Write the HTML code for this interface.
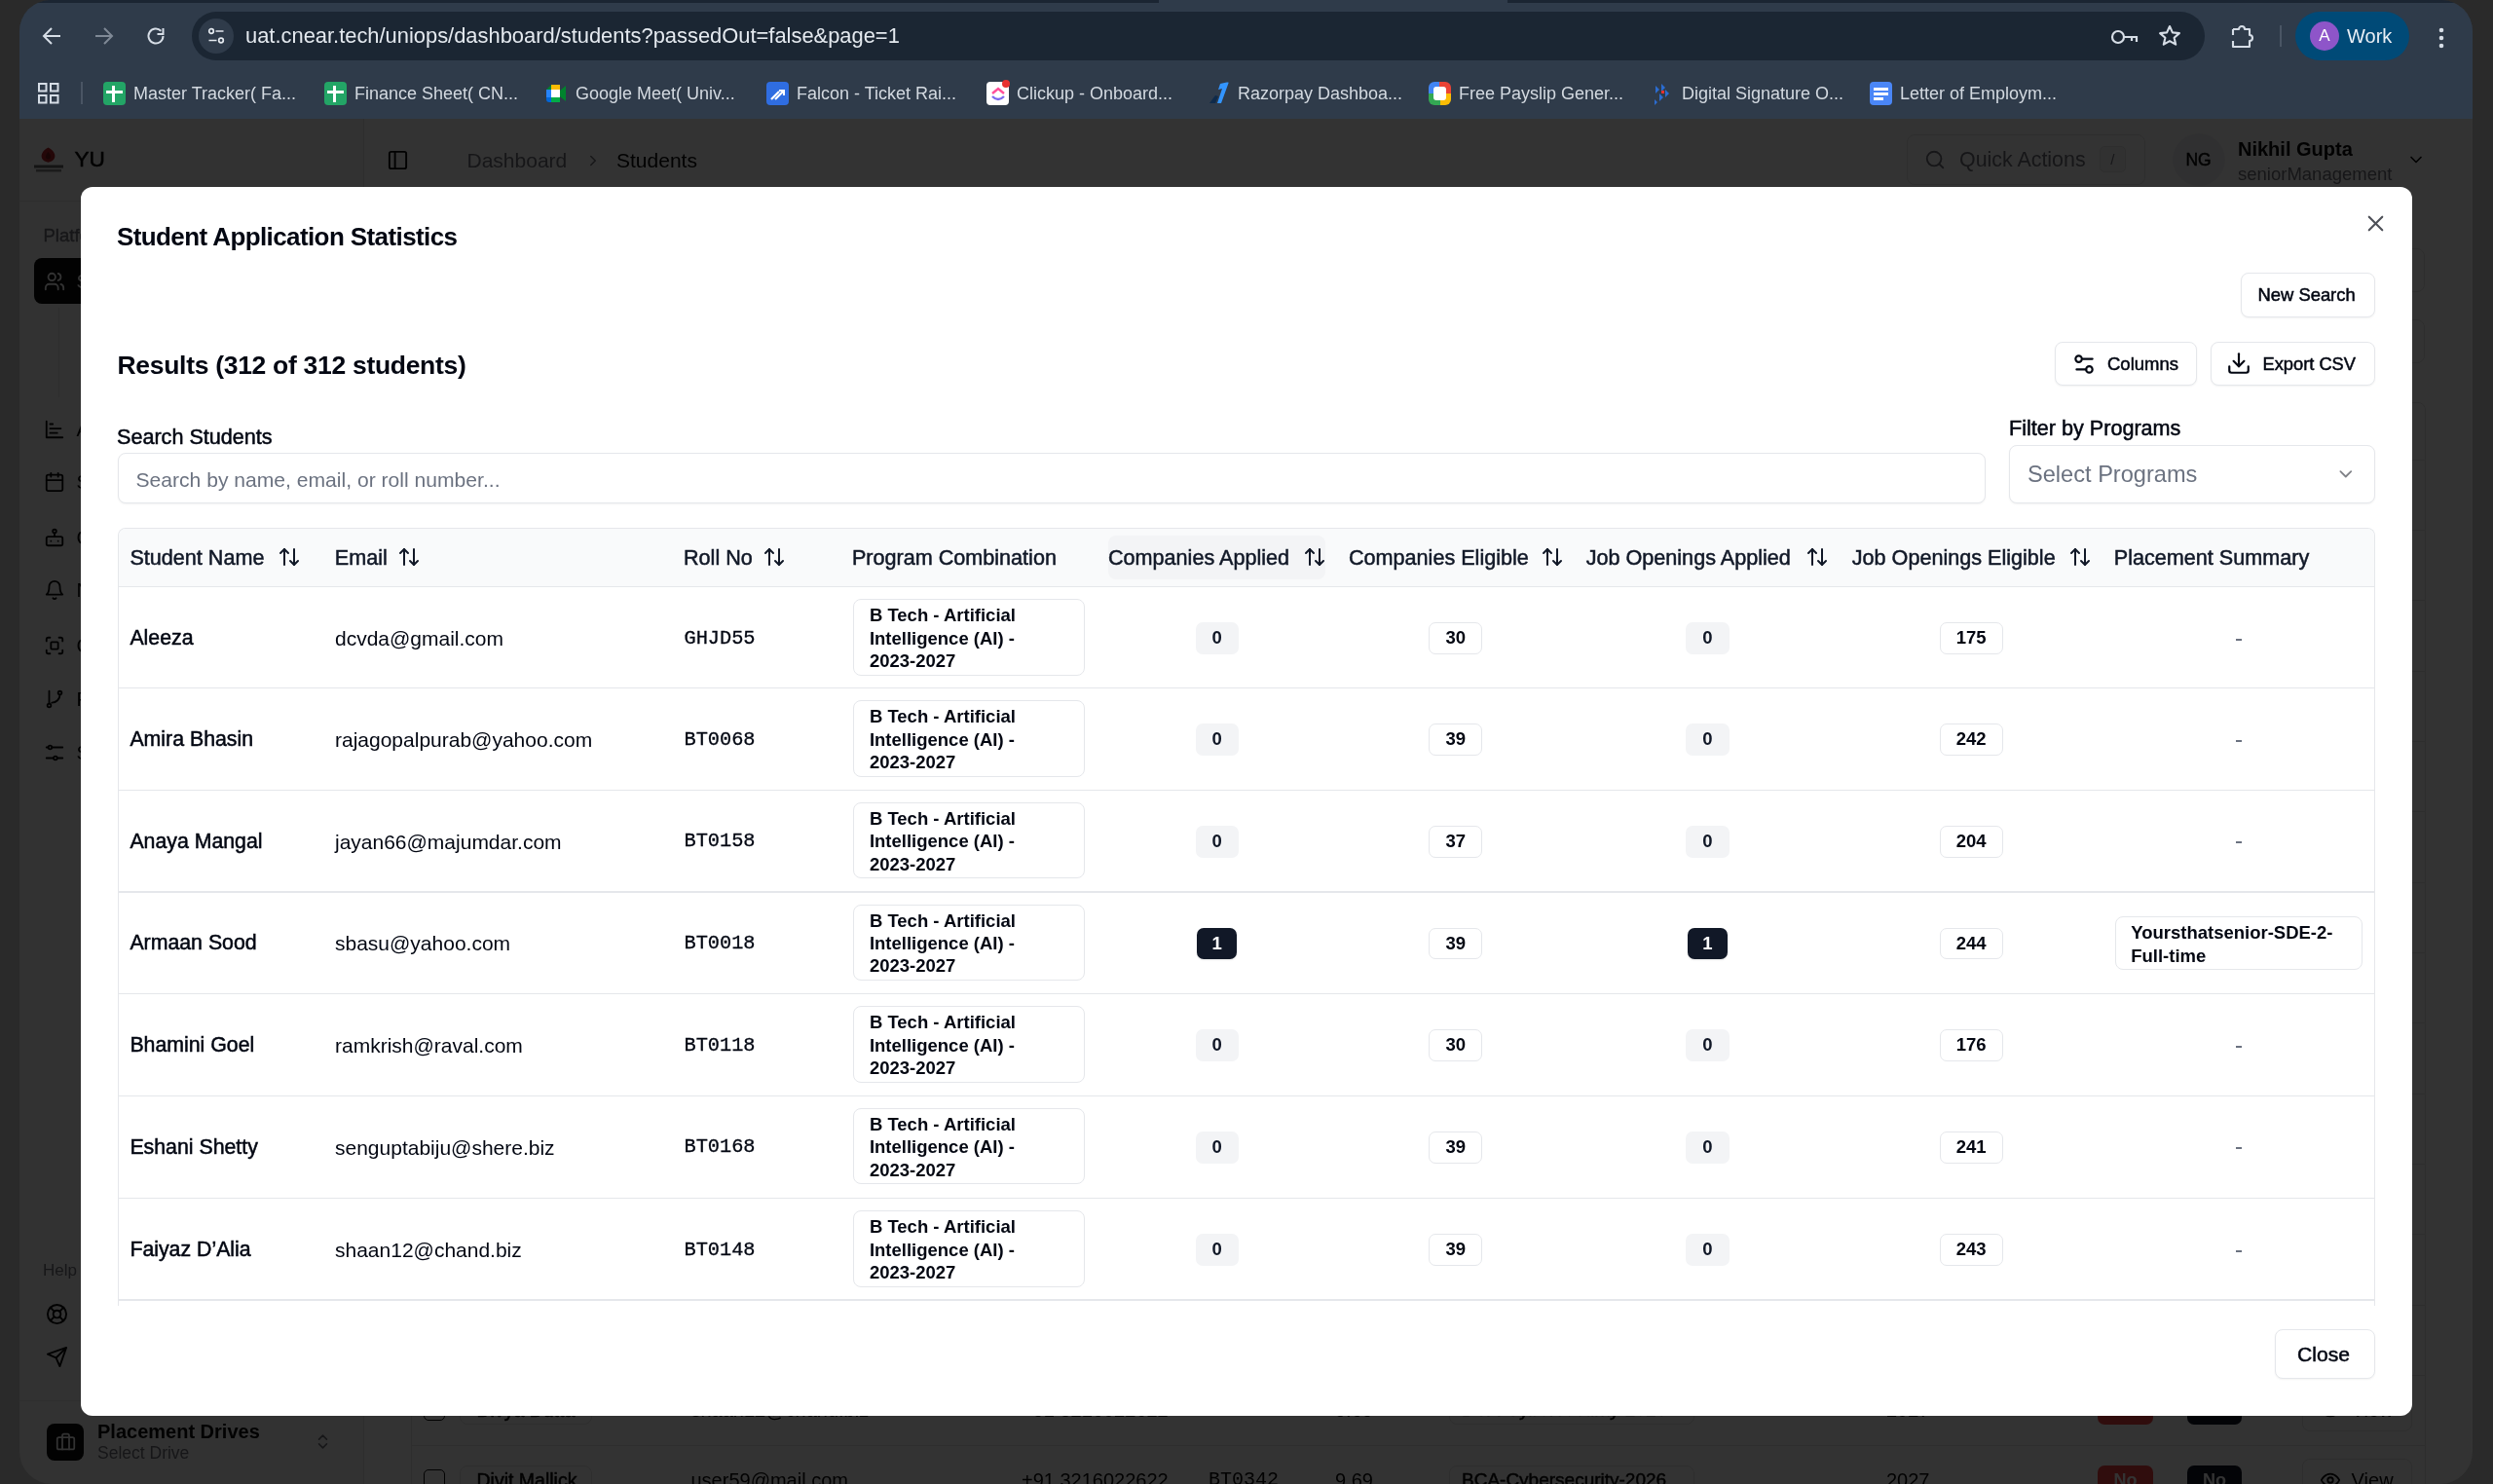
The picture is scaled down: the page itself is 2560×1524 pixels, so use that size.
<!DOCTYPE html>
<html>
<head>
<meta charset="utf-8">
<style>
*{box-sizing:border-box;margin:0;padding:0}
html,body{width:2560px;height:1524px;overflow:hidden;background:#2a2a2a;font-family:"Liberation Sans",sans-serif}
.abs{position:absolute}
#win{position:absolute;left:20px;top:0;width:2519px;height:1524px;border-radius:32px 32px 0 0;overflow:hidden;background:#333;will-change:transform}
#tabstrip{position:absolute;left:0;top:0;width:2520px;height:3px;background:#1b2532}
#acttab{position:absolute;left:1170px;top:0;width:358px;height:3px;background:#2f3b4a}
#toolbar{position:absolute;left:0;top:3px;width:2520px;height:118.5px;background:#2f3b4a}
#addr{position:absolute;left:177px;top:9px;width:2067px;height:50px;border-radius:25px;background:#1b2633}
#siteic{position:absolute;left:7px;top:7px;width:36px;height:36px;border-radius:18px;background:#2f3b4a}
#url{position:absolute;left:55px;top:0;height:50px;line-height:50px;color:#e4e9ef;font-size:21.9px;white-space:nowrap}
.bm{position:absolute;top:81px;height:24px;color:#d3d9e0;font-size:18px;line-height:24px;white-space:nowrap}
.bm .ic{position:absolute;left:0;top:0;width:23px;height:24px;border-radius:4px}
.bm span{position:absolute;left:31px;top:0}
#page{position:absolute;left:0;top:121.5px;width:2520px;height:1403px;background:#fff}
#overlay{position:absolute;left:0;top:121.5px;width:2520px;height:1403px;background:rgba(0,0,0,.8)}
#modal{position:absolute;left:83px;top:192px;width:2394px;height:1262px;background:#fff;border-radius:12px;overflow:hidden;will-change:transform}
.t{position:absolute;line-height:1;white-space:nowrap}
.badge{height:32.6px;border-radius:7px;font-size:18.5px;font-weight:700;line-height:30.6px;text-align:center}
</style>
</head>
<body>
<div id="win">
  <div id="tabstrip"></div><div id="acttab"></div>
  <div id="toolbar">
    <!-- nav icons -->
    <svg class="abs" style="left:22px;top:23px" width="22" height="22" viewBox="0 0 22 22"><path d="M20 11H3M11 3L3 11l8 8" fill="none" stroke="#d6dde6" stroke-width="2"/></svg>
    <svg class="abs" style="left:76px;top:23px" width="22" height="22" viewBox="0 0 22 22"><path d="M2 11h17M11 3l8 8-8 8" fill="none" stroke="#7f8996" stroke-width="2"/></svg>
    <svg class="abs" style="left:129px;top:23px" width="22" height="22" viewBox="0 0 22 22"><path d="M18.5 11a7.5 7.5 0 1 1-2.2-5.3" fill="none" stroke="#d6dde6" stroke-width="2"/><path d="M18.5 3v6h-6" fill="none" stroke="#d6dde6" stroke-width="2"/></svg>
    <div id="addr">
      <div id="siteic"><svg class="abs" style="left:8px;top:8px" width="20" height="20" viewBox="0 0 20 20"><circle cx="5" cy="5" r="2.3" fill="none" stroke="#e4e9ef" stroke-width="1.7"/><path d="M9.5 5h8" stroke="#e4e9ef" stroke-width="1.7"/><circle cx="15" cy="14.5" r="2.3" fill="none" stroke="#e4e9ef" stroke-width="1.7"/><path d="M2.5 14.5h8" stroke="#e4e9ef" stroke-width="1.7"/></svg></div>
      <div id="url">uat.cnear.tech/uniops/dashboard/students?passedOut=false&amp;page=1</div>
    </div>

    <!-- right toolbar icons -->
    <svg class="abs" style="left:2147px;top:26px" width="29" height="18" viewBox="0 0 29 18" fill="none" stroke="#d6dde6" stroke-width="2.2"><circle cx="8" cy="9" r="6"/><path d="M14 9h13v5M22 9v4"/></svg>
    <svg class="abs" style="left:2196px;top:22px" width="24" height="24" viewBox="0 0 24 24" fill="none" stroke="#d6dde6" stroke-width="2.1" stroke-linejoin="round"><path d="M12 2l2.9 6.4 7 .7-5.3 4.7 1.6 6.9L12 17.1 5.8 20.7l1.6-6.9L2.1 9.1l7-.7z"/></svg>
    <svg class="abs" style="left:2270px;top:21px" width="26" height="26" viewBox="0 0 26 26" fill="none" stroke="#d6dde6" stroke-width="2.1" stroke-linejoin="round"><path d="M3 6h6a3 3 0 0 1 6 0h5v6a3 3 0 0 1 0 6v6H3v-6M3 6v6"/></svg>
    <div class="abs" style="left:2321px;top:23px;width:2px;height:22px;background:#4a5564"></div>
    <div class="abs" style="left:2337px;top:8.5px;width:117px;height:50px;border-radius:25px;background:#004a77">
      <div class="abs" style="left:15px;top:10px;width:30px;height:30px;border-radius:15px;background:#8e55c9;color:#fff;font-size:17px;line-height:30px;text-align:center">A</div>
      <div class="abs" style="left:53px;top:0;height:50px;line-height:50px;color:#e8eef5;font-size:20px">Work</div>
    </div>
    <svg class="abs" style="left:2483px;top:24px" width="8" height="24" viewBox="0 0 8 24" fill="#d6dde6"><circle cx="4" cy="4" r="2.3"/><circle cx="4" cy="12" r="2.3"/><circle cx="4" cy="20" r="2.3"/></svg>

    <!-- apps grid -->
    <svg class="abs" style="left:19px;top:82px" width="22" height="22" viewBox="0 0 22 22" fill="none" stroke="#d6dde6" stroke-width="2"><rect x="1" y="1" width="7.5" height="7.5"/><rect x="13" y="1" width="7.5" height="7.5"/><rect x="1" y="13" width="7.5" height="7.5"/><rect x="13" y="13" width="7.5" height="7.5"/></svg>
    <div class="abs" style="left:62.5px;top:81px;width:2px;height:23px;background:#4a5564"></div>
    <div class="bm" style="left:86px"><div class="ic" style="background:#23a566"><div class="abs" style="left:3px;top:9px;width:17px;height:3px;background:#fff"></div><div class="abs" style="left:9px;top:4px;width:3px;height:17px;background:#fff"></div></div><span>Master Tracker( Fa...</span></div>
    <div class="bm" style="left:313px"><div class="ic" style="background:#23a566"><div class="abs" style="left:3px;top:9px;width:17px;height:3px;background:#fff"></div><div class="abs" style="left:9px;top:4px;width:3px;height:17px;background:#fff"></div></div><span>Finance Sheet( CN...</span></div>
    <div class="bm" style="left:540px"><svg class="ic" width="23" height="24" viewBox="0 0 23 24"><path d="M1 8l5-5h9v6l6-5v16l-6-5v6H6" fill="#00832d"/><path d="M1 8h5v8H1z" fill="#2684fc"/><path d="M6 3h9v5H6z" fill="#fbbc04"/><path d="M1 16h5v5H4a3 3 0 0 1-3-3z" fill="#0066da"/><path d="M6 16h9v5H6z" fill="#00ac47"/><path d="M6 8h9v8H6z" fill="#fff"/></svg><span>Google Meet( Univ...</span></div>
    <div class="bm" style="left:767px"><div class="ic" style="background:#2f6de1"><svg class="abs" style="left:4px;top:5px" width="15" height="14" viewBox="0 0 15 14"><path d="M1 13l8-8M5 13l8-8M9 4h5v5" stroke="#fff" stroke-width="2.2" fill="none"/></svg></div><span>Falcon - Ticket Rai...</span></div>
    <div class="bm" style="left:993px"><div class="ic" style="background:#fff"><svg class="abs" style="left:4px;top:5px" width="16" height="15" viewBox="0 0 16 15"><path d="M2 7l6-5 6 5" stroke="#ff4f9a" stroke-width="2.4" fill="none"/><path d="M2 10c4 4 8 4 12 0" stroke="#7b68ee" stroke-width="2.4" fill="none"/></svg><div class="abs" style="left:16px;top:-2px;width:8px;height:8px;border-radius:4px;background:#e8312f"></div></div><span>Clickup - Onboard...</span></div>
    <div class="bm" style="left:1220px"><svg class="ic" width="23" height="24" viewBox="0 0 23 24"><path d="M2 22l6-8 3 1-3 7z" fill="#0f2a4a"/><path d="M10 22l5-15-4 1 2-6 9-2-8 22z" fill="#3395ff"/></svg><span>Razorpay Dashboa...</span></div>
    <div class="bm" style="left:1447px"><div class="ic" style="background:conic-gradient(#ea4335 0 25%,#fbbc04 0 50%,#34a853 0 75%,#4285f4 0);border-radius:6px"><div class="abs" style="left:5px;top:5px;width:13px;height:14px;background:#fff;border-radius:3px"></div></div><span>Free Payslip Gener...</span></div>
    <div class="bm" style="left:1676px"><svg class="ic" width="23" height="24" viewBox="0 0 23 24"><path d="M4 4l4 4-4 4zM10 2l4 4-4 4zM8 12l4 4-4 4zM14 8l4 4-4 4zM3 18l3 3-3 3z" fill="#2b6cd1"/><rect x="10" y="9" width="3" height="3" fill="#e8312f"/></svg><span>Digital Signature O...</span></div>
    <div class="bm" style="left:1900px"><div class="ic" style="background:#4a86f7"><div class="abs" style="left:4px;top:6px;width:15px;height:2.5px;background:#fff"></div><div class="abs" style="left:4px;top:11px;width:15px;height:2.5px;background:#fff"></div><div class="abs" style="left:4px;top:16px;width:10px;height:2.5px;background:#fff"></div></div><span>Letter of Employm...</span></div>
  </div>
  <div id="page">
<div class="abs" style="left:0;top:0;width:353.5px;height:1403px;background:#fafafa;border-right:1px solid #e5e5e5"></div>
<svg class="abs" style="left:14px;top:28px" width="32" height="28" viewBox="0 0 32 28"><path d="M15.5 1.5c-3 1.5-5.5 3.5-6.5 6.5-1.2 3.4.6 6.6 3.5 7.8l3 .9 3-.9c2.9-1.2 4.7-4.4 3.5-7.8-1-3-3.5-5-6.5-6.5z" fill="#b3262b"/><path d="M15.5 6c-1.5 1.5-2.6 3.2-2.6 5 0 1.6 1.2 2.6 2.6 2.6s2.6-1 2.6-2.6c0-1.8-1.1-3.5-2.6-5z" fill="#7a1a1d"/><rect x="1" y="19.5" width="30" height="3" fill="#666"/><rect x="3" y="24" width="26" height="2.5" fill="#888"/></svg>
<div class="abs" style="left:56.5px;top:30.5px;font-size:22.6px;-webkit-text-stroke:0.5px currentColor;color:#0a0a0a;line-height:24px">YU</div>
<div class="abs" style="left:24.5px;top:109.6px;font-size:18.5px;-webkit-text-stroke:0.4px currentColor;color:#71717a;line-height:22px">Platform</div>
<div class="abs" style="left:0;top:84.4px;width:353.5px;height:1px;background:#e5e5e5"></div>
<div class="abs" style="left:15px;top:143.5px;width:323px;height:47px;border-radius:8px;background:#0a0a0a"></div>
<svg class="abs" style="left:25px;top:156px" width="22" height="22" viewBox="0 0 24 24" fill="none" stroke="#fafafa" stroke-width="2" stroke-linecap="round" stroke-linejoin="round"><path d="M16 21v-2a4 4 0 0 0-4-4H6a4 4 0 0 0-4 4v2"/><circle cx="9" cy="7" r="4"/><path d="M22 21v-2a4 4 0 0 0-3-3.87M16 3.13a4 4 0 0 1 0 7.75"/></svg><div class="abs" style="left:40px;top:194.5px;width:1px;height:92px;background:#e5e5e5"></div>
<div class="abs" style="left:58.5px;top:156.0px;font-size:20px;color:#fafafa;line-height:22px;white-space:nowrap">Students</div>
<div class="abs" style="left:58.5px;top:308.5px;font-size:20px;color:#0a0a0a;line-height:22px;white-space:nowrap">Analytics</div>
<div class="abs" style="left:58.5px;top:362.5px;font-size:20px;color:#0a0a0a;line-height:22px;white-space:nowrap">Schedule</div>
<div class="abs" style="left:58.5px;top:419.0px;font-size:20px;color:#0a0a0a;line-height:22px;white-space:nowrap">Companies</div>
<div class="abs" style="left:58.5px;top:473.5px;font-size:20px;color:#0a0a0a;line-height:22px;white-space:nowrap">Notifications</div>
<div class="abs" style="left:58.5px;top:530.0px;font-size:20px;color:#0a0a0a;line-height:22px;white-space:nowrap">Campus</div>
<div class="abs" style="left:58.5px;top:585.5px;font-size:20px;color:#0a0a0a;line-height:22px;white-space:nowrap">Pipelines</div>
<div class="abs" style="left:58.5px;top:640.5px;font-size:20px;color:#0a0a0a;line-height:22px;white-space:nowrap">Settings</div>
<svg class="abs" style="left:25px;top:308.5px" width="22" height="22" viewBox="0 0 24 24" fill="none" stroke="#0a0a0a" stroke-width="2" stroke-linecap="round" stroke-linejoin="round"><path d="M3 3v18h18"/><path d="M7 16h8M7 11h12M7 6h3"/></svg>
<svg class="abs" style="left:25px;top:362.5px" width="22" height="22" viewBox="0 0 24 24" fill="none" stroke="#0a0a0a" stroke-width="2" stroke-linecap="round" stroke-linejoin="round"><rect x="3" y="4" width="18" height="18" rx="2"/><path d="M16 2v4M8 2v4M3 10h18"/></svg>
<svg class="abs" style="left:25px;top:419px" width="22" height="22" viewBox="0 0 24 24" fill="none" stroke="#0a0a0a" stroke-width="2" stroke-linecap="round" stroke-linejoin="round"><rect x="3" y="11" width="18" height="10" rx="2"/><path d="M12 7v4M8 16h.01M16 16h.01"/><circle cx="12" cy="5" r="2"/></svg>
<svg class="abs" style="left:25px;top:473.5px" width="22" height="22" viewBox="0 0 24 24" fill="none" stroke="#0a0a0a" stroke-width="2" stroke-linecap="round" stroke-linejoin="round"><path d="M6 8a6 6 0 0 1 12 0c0 7 3 9 3 9H3s3-2 3-9"/><path d="M10.3 21a1.94 1.94 0 0 0 3.4 0"/></svg>
<svg class="abs" style="left:25px;top:530px" width="22" height="22" viewBox="0 0 24 24" fill="none" stroke="#0a0a0a" stroke-width="2" stroke-linecap="round" stroke-linejoin="round"><path d="M3 7V5a2 2 0 0 1 2-2h2M17 3h2a2 2 0 0 1 2 2v2M21 17v2a2 2 0 0 1-2 2h-2M7 21H5a2 2 0 0 1-2-2v-2"/><rect x="8" y="8" width="8" height="8" rx="1"/></svg>
<svg class="abs" style="left:25px;top:585.5px" width="22" height="22" viewBox="0 0 24 24" fill="none" stroke="#0a0a0a" stroke-width="2" stroke-linecap="round" stroke-linejoin="round"><circle cx="6" cy="19" r="2"/><circle cx="18" cy="5" r="2"/><path d="M6 3v14M18 7a9 9 0 0 1-9 9"/></svg>
<svg class="abs" style="left:25px;top:640.5px" width="22" height="22" viewBox="0 0 24 24" fill="none" stroke="#0a0a0a" stroke-width="2" stroke-linecap="round" stroke-linejoin="round"><path d="M21 6H9M5 6H3M21 18h-6M11 18H3"/><circle cx="7" cy="6" r="2"/><circle cx="13" cy="18" r="2"/></svg>
<div class="abs" style="left:24px;top:1172.5px;font-size:17px;color:#71717a;line-height:22px">Help</div>
<svg class="abs" style="left:27px;top:1216px" width="23" height="23" viewBox="0 0 24 24" fill="none" stroke="#0a0a0a" stroke-width="2" stroke-linecap="round" stroke-linejoin="round"><circle cx="12" cy="12" r="10"/><circle cx="12" cy="12" r="4"/><path d="M4.9 4.9l4.3 4.3M14.8 14.8l4.3 4.3M14.8 9.2l4.3-4.3M4.9 19.1l4.3-4.3"/></svg><svg class="abs" style="left:27px;top:1260px" width="23" height="23" viewBox="0 0 24 24" fill="none" stroke="#0a0a0a" stroke-width="2" stroke-linecap="round" stroke-linejoin="round"><path d="M22 2L11 13M22 2l-7 20-4-9-9-4z"/></svg><div class="abs" style="left:0;top:1316.5px;width:353.5px;height:1px;background:#e5e5e5"></div>
<div class="abs" style="left:28.4px;top:1340.3px;width:38px;height:38.5px;border-radius:8px;background:#0a0a0a"></div>
<svg class="abs" style="left:37px;top:1348px" width="21" height="21" viewBox="0 0 24 24" fill="none" stroke="#fafafa" stroke-width="2" stroke-linecap="round" stroke-linejoin="round"><rect x="2" y="7" width="20" height="14" rx="2"/><path d="M16 21V5a2 2 0 0 0-2-2h-4a2 2 0 0 0-2 2v16"/></svg><div class="abs" style="left:80px;top:1337px;font-size:20px;font-weight:700;color:#0a0a0a;line-height:22px">Placement Drives</div>
<div class="abs" style="left:80px;top:1360px;font-size:17.5px;color:#71717a;line-height:20px">Select Drive</div>
<svg class="abs" style="left:302px;top:1349px" width="19" height="19" viewBox="0 0 24 24" fill="none" stroke="#71717a" stroke-width="2" stroke-linecap="round" stroke-linejoin="round"><path d="M7 15l5 5 5-5M7 9l5-5 5 5"/></svg><svg class="abs" style="left:377px;top:31px" width="23" height="23" viewBox="0 0 24 24" fill="none" stroke="#0a0a0a" stroke-width="2" stroke-linecap="round" stroke-linejoin="round"><rect x="3" y="3" width="18" height="18" rx="2"/><path d="M9 3v18"/></svg><div class="abs" style="left:459.5px;top:32px;font-size:21px;color:#71717a;line-height:22px">Dashboard</div>
<svg class="abs" style="left:580px;top:34px" width="18" height="18" viewBox="0 0 24 24" fill="none" stroke="#71717a" stroke-width="2" stroke-linecap="round" stroke-linejoin="round"><path d="M9 18l6-6-6-6"/></svg><div class="abs" style="left:613px;top:32px;font-size:21px;color:#0a0a0a;line-height:22px">Students</div>
<div class="abs" style="left:1938px;top:16px;width:244.5px;height:52.5px;border:1px solid #e5e5e5;border-radius:8px"></div>
<svg class="abs" style="left:1956px;top:31px" width="22" height="22" viewBox="0 0 24 24" fill="none" stroke="#71717a" stroke-width="2" stroke-linecap="round" stroke-linejoin="round"><circle cx="11" cy="11" r="8"/><path d="M21 21l-4.3-4.3"/></svg><div class="abs" style="left:1992px;top:31px;font-size:21.4px;color:#71717a;line-height:22px">Quick Actions</div>
<div class="abs" style="left:2135.7px;top:28.5px;width:27.5px;height:27px;border:1px solid #e5e5e5;border-radius:5px;background:#f4f4f5;font-size:15px;color:#71717a;text-align:center;line-height:25px">/</div>
<div class="abs" style="left:2210.6px;top:15px;width:54px;height:54px;border-radius:27px;background:#f1f1f3;font-size:17.5px;-webkit-text-stroke:0.45px currentColor;color:#0a0a0a;text-align:center;line-height:54px">NG</div>
<div class="abs" style="left:2278px;top:20px;font-size:20px;font-weight:700;color:#0a0a0a;line-height:22px">Nikhil Gupta</div>
<div class="abs" style="left:2278px;top:46px;font-size:18.5px;color:#71717a;line-height:22px">seniorManagement</div>
<svg class="abs" style="left:2451px;top:32px" width="20" height="20" viewBox="0 0 24 24" fill="none" stroke="#0a0a0a" stroke-width="2" stroke-linecap="round" stroke-linejoin="round"><path d="M6 9l6 6 6-6"/></svg><div class="abs" style="left:2000px;top:133.2px;width:470px;height:45.6px;border:1px solid #e5e5e5;border-radius:8px"></div>
<div class="abs" style="left:2000px;top:206.1px;width:470px;height:45.4px;border:1px solid #e5e5e5;border-radius:8px"></div>
<div class="abs" style="left:402px;top:291.5px;width:2069px;height:1200px;border:1px solid #e5e5e5;border-radius:8px"></div>
<div class="abs" style="left:402px;top:350.0px;width:2069px;height:1px;background:#e5e5e5"></div>
<div class="abs" style="left:402px;top:422.3px;width:2069px;height:1px;background:#e5e5e5"></div>
<div class="abs" style="left:402px;top:494.7px;width:2069px;height:1px;background:#e5e5e5"></div>
<div class="abs" style="left:402px;top:567.0px;width:2069px;height:1px;background:#e5e5e5"></div>
<div class="abs" style="left:402px;top:639.4px;width:2069px;height:1px;background:#e5e5e5"></div>
<div class="abs" style="left:402px;top:711.7px;width:2069px;height:1px;background:#e5e5e5"></div>
<div class="abs" style="left:402px;top:784.0px;width:2069px;height:1px;background:#e5e5e5"></div>
<div class="abs" style="left:402px;top:856.4px;width:2069px;height:1px;background:#e5e5e5"></div>
<div class="abs" style="left:402px;top:928.7px;width:2069px;height:1px;background:#e5e5e5"></div>
<div class="abs" style="left:402px;top:1001.1px;width:2069px;height:1px;background:#e5e5e5"></div>
<div class="abs" style="left:402px;top:1073.4px;width:2069px;height:1px;background:#e5e5e5"></div>
<div class="abs" style="left:402px;top:1145.7px;width:2069px;height:1px;background:#e5e5e5"></div>
<div class="abs" style="left:402px;top:1218.1px;width:2069px;height:1px;background:#e5e5e5"></div>
<div class="abs" style="left:402px;top:1290.4px;width:2069px;height:1px;background:#e5e5e5"></div>
<div class="abs" style="left:402px;top:1362.8px;width:2069px;height:1px;background:#e5e5e5"></div>
<div class="abs" style="left:415px;top:1315.3px;width:22px;height:22px;border:1.5px solid #0a0a0a;border-radius:5px"></div>
<div class="abs" style="left:451.5px;top:1311.3px;width:136px;height:30px;border:1px solid #e5e5e5;border-radius:8px;font-size:19.5px;-webkit-text-stroke:0.5px currentColor;color:#0a0a0a;line-height:28px;padding-left:17px;white-space:nowrap">Divya Dutta</div>
<div class="abs" style="left:689.5px;top:1315.3px;font-size:20px;color:#0a0a0a;line-height:22px">shaan12@chand.biz</div>
<div class="abs" style="left:1029px;top:1315.3px;font-size:20px;color:#0a0a0a;line-height:22px">+91 3216022622</div>
<div class="abs" style="left:1221px;top:1315.3px;font-family:'Liberation Mono',monospace;font-size:20px;color:#0a0a0a;line-height:22px">BT0342</div>
<div class="abs" style="left:1351px;top:1315.3px;font-size:20px;color:#0a0a0a;line-height:22px">9.69</div>
<div class="abs" style="left:1468px;top:1311.3px;width:252px;height:30px;border:1px solid #e5e5e5;border-radius:8px;font-size:19px;-webkit-text-stroke:0.45px currentColor;color:#0a0a0a;line-height:28px;padding-left:12px;white-space:nowrap">BCA-Cybersecurity-2026</div>
<div class="abs" style="left:1917px;top:1315.3px;font-size:20px;color:#0a0a0a;line-height:22px">2027</div>
<div class="abs" style="left:2134px;top:1310.8px;width:57px;height:31px;border-radius:7px;background:#ef4444;font-size:18px;font-weight:700;color:#fff;line-height:31px;text-align:center">No</div>
<div class="abs" style="left:2226px;top:1310.8px;width:56px;height:31px;border-radius:7px;background:#111827;font-size:18px;font-weight:700;color:#fff;line-height:31px;text-align:center">No</div>
<div class="abs" style="left:2343.6px;top:1304.3px;width:113.4px;height:44px;border:1px solid #e5e5e5;border-radius:8px;font-size:20px;color:#0a0a0a;line-height:42px;padding-left:50px">View</div>
<svg class="abs" style="left:2362px;top:1315.3px" width="22" height="22" viewBox="0 0 24 24" fill="none" stroke="#0a0a0a" stroke-width="2" stroke-linecap="round" stroke-linejoin="round"><path d="M2 12s3-7 10-7 10 7 10 7-3 7-10 7-10-7-10-7z"/><circle cx="12" cy="12" r="3"/></svg><div class="abs" style="left:415px;top:1387.7px;width:22px;height:22px;border:1.5px solid #0a0a0a;border-radius:5px"></div>
<div class="abs" style="left:451.5px;top:1383.7px;width:136px;height:30px;border:1px solid #e5e5e5;border-radius:8px;font-size:19.5px;-webkit-text-stroke:0.5px currentColor;color:#0a0a0a;line-height:28px;padding-left:17px;white-space:nowrap">Divit Mallick</div>
<div class="abs" style="left:689.5px;top:1387.7px;font-size:20px;color:#0a0a0a;line-height:22px">user59@mail.com</div>
<div class="abs" style="left:1029px;top:1387.7px;font-size:20px;color:#0a0a0a;line-height:22px">+91 3216022622</div>
<div class="abs" style="left:1221px;top:1387.7px;font-family:'Liberation Mono',monospace;font-size:20px;color:#0a0a0a;line-height:22px">BT0342</div>
<div class="abs" style="left:1351px;top:1387.7px;font-size:20px;color:#0a0a0a;line-height:22px">9.69</div>
<div class="abs" style="left:1468px;top:1383.7px;width:252px;height:30px;border:1px solid #e5e5e5;border-radius:8px;font-size:19px;-webkit-text-stroke:0.45px currentColor;color:#0a0a0a;line-height:28px;padding-left:12px;white-space:nowrap">BCA-Cybersecurity-2026</div>
<div class="abs" style="left:1917px;top:1387.7px;font-size:20px;color:#0a0a0a;line-height:22px">2027</div>
<div class="abs" style="left:2134px;top:1383.2px;width:57px;height:31px;border-radius:7px;background:#ef4444;font-size:18px;font-weight:700;color:#fff;line-height:31px;text-align:center">No</div>
<div class="abs" style="left:2226px;top:1383.2px;width:56px;height:31px;border-radius:7px;background:#111827;font-size:18px;font-weight:700;color:#fff;line-height:31px;text-align:center">No</div>
<div class="abs" style="left:2343.6px;top:1376.7px;width:113.4px;height:44px;border:1px solid #e5e5e5;border-radius:8px;font-size:20px;color:#0a0a0a;line-height:42px;padding-left:50px">View</div>
<svg class="abs" style="left:2362px;top:1387.7px" width="22" height="22" viewBox="0 0 24 24" fill="none" stroke="#0a0a0a" stroke-width="2" stroke-linecap="round" stroke-linejoin="round"><path d="M2 12s3-7 10-7 10 7 10 7-3 7-10 7-10-7-10-7z"/><circle cx="12" cy="12" r="3"/></svg></div>
  <div id="overlay"></div>
</div>
<svg class="abs" style="left:0;top:1480px" width="2560" height="44" viewBox="0 1480 2560 44"><path d="M20 1491 A33 33 0 0 0 53 1524 L20 1524 Z" fill="#2a2a2a"/><path d="M2539 1491 A33 33 0 0 1 2506 1524 L2539 1524 Z" fill="#2a2a2a"/></svg>
<!--MODAL-START--><div id="modal">
<div class="t" style="left:37.0px;top:38.0px;font-size:26px;font-weight:700;color:#030712;letter-spacing:-0.6px;">Student Application Statistics</div>
<svg class="abs" style="left:2343.2px;top:23.6px;opacity:0.7" width="27" height="27" viewBox="0 0 24 24" fill="none" stroke="#030712" stroke-width="1.9" stroke-linecap="round" stroke-linejoin="round"><path d="M18 6 6 18"/><path d="m6 6 12 12"/></svg>
<div class="abs" style="left:2217.7px;top:88.0px;width:137.9px;height:45.5px;border:1px solid #e5e7eb;border-radius:8px;background:#fff;box-shadow:0 1px 2px rgba(0,0,0,.05)"></div>
<div class="t" style="left:2235.5px;top:101.8px;font-size:18.4px;-webkit-text-stroke:0.5px currentColor;color:#030712;">New Search</div>
<div class="t" style="left:37.5px;top:169.6px;font-size:26.5px;font-weight:700;color:#030712;letter-spacing:-0.3px;">Results (312 of 312 students)</div>
<div class="abs" style="left:2027.4px;top:158.6px;width:146.1px;height:45.6px;border:1px solid #e5e7eb;border-radius:8px;background:#fff;box-shadow:0 1px 2px rgba(0,0,0,.05)"></div>
<svg class="abs" style="left:2044.3px;top:168.8px;opacity:1" width="26" height="26" viewBox="0 0 24 24" fill="none" stroke="#030712" stroke-width="2.0" stroke-linecap="round" stroke-linejoin="round"><path d="M20 7h-9"/><path d="M14 17H5"/><circle cx="17" cy="17" r="3"/><circle cx="7" cy="7" r="3"/></svg>
<div class="t" style="left:2081.0px;top:172.8px;font-size:18.5px;-webkit-text-stroke:0.5px currentColor;color:#030712;">Columns</div>
<div class="abs" style="left:2187.0px;top:158.6px;width:169.3px;height:45.6px;border:1px solid #e5e7eb;border-radius:8px;background:#fff;box-shadow:0 1px 2px rgba(0,0,0,.05)"></div>
<svg class="abs" style="left:2203.3px;top:168.3px;opacity:1" width="26" height="26" viewBox="0 0 24 24" fill="none" stroke="#030712" stroke-width="2.0" stroke-linecap="round" stroke-linejoin="round"><path d="M21 15v4a2 2 0 0 1-2 2H5a2 2 0 0 1-2-2v-4"/><path d="m7 10 5 5 5-5"/><path d="M12 15V3"/></svg>
<div class="t" style="left:2240.5px;top:173.0px;font-size:18.3px;-webkit-text-stroke:0.5px currentColor;color:#030712;">Export CSV</div>
<div class="t" style="left:37.0px;top:245.7px;font-size:21.6px;-webkit-text-stroke:0.5px currentColor;color:#030712;">Search Students</div>
<div class="abs" style="left:37.9px;top:273.1px;width:1917.8px;height:52.4px;border:1px solid #e5e7eb;border-radius:8px;background:#fff;box-shadow:0 1px 2px rgba(0,0,0,.05)"></div>
<div class="t" style="left:56.5px;top:290.1px;font-size:21.1px;color:#6b7280;">Search by name, email, or roll number...</div>
<div class="t" style="left:1980.0px;top:236.9px;font-size:21.6px;-webkit-text-stroke:0.5px currentColor;color:#030712;">Filter by Programs</div>
<div class="abs" style="left:1980.2px;top:264.6px;width:376.1px;height:60.9px;border:1px solid #e5e7eb;border-radius:8px;background:#fff;box-shadow:0 1px 2px rgba(0,0,0,.05)"></div>
<div class="t" style="left:1999.0px;top:284.0px;font-size:23.6px;color:#6b7280;">Select Programs</div>
<svg class="abs" style="left:2314.7px;top:284.1px;opacity:0.5" width="21.6" height="21.6" viewBox="0 0 24 24" fill="none" stroke="#030712" stroke-width="2" stroke-linecap="round" stroke-linejoin="round"><path d="m6 9 6 6 6-6"/></svg>
<div class="abs" style="left:38.3px;top:350.2px;width:2318.1px;height:799.0px;border:1px solid #e5e7eb;border-bottom:none;border-radius:8px 8px 0 0;overflow:hidden">
<div class="abs" style="left:0.0px;top:0.0px;width:2318.1px;height:59.1px;#f9fafb;background:#f9fafb"></div>
<div class="abs" style="left:1015.7px;top:6.6px;width:223.5px;height:45.7px;background:#f3f4f6;border-radius:8px"></div>
<div class="t" style="left:11.1px;top:19.3px;font-size:21.6px;-webkit-text-stroke:0.5px currentColor;color:#111827;">Student Name</div>
<svg class="abs" style="left:162.5px;top:17.3px;opacity:1" width="24" height="24" viewBox="0 0 24 24" fill="none" stroke="#111827" stroke-width="2" stroke-linecap="round" stroke-linejoin="round"><path d="m21 16-4 4-4-4"/><path d="M17 20V4"/><path d="m3 8 4-4 4 4"/><path d="M7 4v16"/></svg>
<div class="t" style="left:221.5px;top:19.3px;font-size:21.6px;-webkit-text-stroke:0.5px currentColor;color:#111827;">Email</div>
<svg class="abs" style="left:286.0px;top:17.3px;opacity:1" width="24" height="24" viewBox="0 0 24 24" fill="none" stroke="#111827" stroke-width="2" stroke-linecap="round" stroke-linejoin="round"><path d="m21 16-4 4-4-4"/><path d="M17 20V4"/><path d="m3 8 4-4 4 4"/><path d="M7 4v16"/></svg>
<div class="t" style="left:579.7px;top:19.3px;font-size:21.6px;-webkit-text-stroke:0.5px currentColor;color:#111827;">Roll No</div>
<svg class="abs" style="left:660.7px;top:17.3px;opacity:1" width="24" height="24" viewBox="0 0 24 24" fill="none" stroke="#111827" stroke-width="2" stroke-linecap="round" stroke-linejoin="round"><path d="m21 16-4 4-4-4"/><path d="M17 20V4"/><path d="m3 8 4-4 4 4"/><path d="M7 4v16"/></svg>
<div class="t" style="left:752.6px;top:19.3px;font-size:21.6px;-webkit-text-stroke:0.5px currentColor;color:#111827;">Program Combination</div>
<div class="t" style="left:1015.7px;top:19.3px;font-size:21.6px;-webkit-text-stroke:0.5px currentColor;color:#111827;">Companies Applied</div>
<svg class="abs" style="left:1215.9px;top:17.3px;opacity:1" width="24" height="24" viewBox="0 0 24 24" fill="none" stroke="#111827" stroke-width="2" stroke-linecap="round" stroke-linejoin="round"><path d="m21 16-4 4-4-4"/><path d="M17 20V4"/><path d="m3 8 4-4 4 4"/><path d="M7 4v16"/></svg>
<div class="t" style="left:1262.7px;top:19.3px;font-size:21.6px;-webkit-text-stroke:0.5px currentColor;color:#111827;">Companies Eligible</div>
<svg class="abs" style="left:1459.7px;top:17.3px;opacity:1" width="24" height="24" viewBox="0 0 24 24" fill="none" stroke="#111827" stroke-width="2" stroke-linecap="round" stroke-linejoin="round"><path d="m21 16-4 4-4-4"/><path d="M17 20V4"/><path d="m3 8 4-4 4 4"/><path d="M7 4v16"/></svg>
<div class="t" style="left:1506.4px;top:19.3px;font-size:21.6px;-webkit-text-stroke:0.5px currentColor;color:#111827;">Job Openings Applied</div>
<svg class="abs" style="left:1732.1px;top:17.3px;opacity:1" width="24" height="24" viewBox="0 0 24 24" fill="none" stroke="#111827" stroke-width="2" stroke-linecap="round" stroke-linejoin="round"><path d="m21 16-4 4-4-4"/><path d="M17 20V4"/><path d="m3 8 4-4 4 4"/><path d="M7 4v16"/></svg>
<div class="t" style="left:1779.5px;top:19.3px;font-size:21.6px;-webkit-text-stroke:0.5px currentColor;color:#111827;">Job Openings Eligible</div>
<svg class="abs" style="left:2001.7px;top:17.3px;opacity:1" width="24" height="24" viewBox="0 0 24 24" fill="none" stroke="#111827" stroke-width="2" stroke-linecap="round" stroke-linejoin="round"><path d="m21 16-4 4-4-4"/><path d="M17 20V4"/><path d="m3 8 4-4 4 4"/><path d="M7 4v16"/></svg>
<div class="t" style="left:2048.5px;top:19.3px;font-size:21.6px;-webkit-text-stroke:0.5px currentColor;color:#111827;">Placement Summary</div>
<div class="abs" style="left:0.0px;top:59.1px;width:2318.1px;height:1.2px;background:#e5e7eb"></div>
<div class="abs" style="left:0.0px;top:163.0px;width:2318.1px;height:1.2px;background:#e5e7eb"></div>
<div class="abs" style="left:0.0px;top:267.8px;width:2318.1px;height:1.2px;background:#e5e7eb"></div>
<div class="abs" style="left:0.0px;top:372.3px;width:2318.1px;height:1.2px;background:#e5e7eb"></div>
<div class="abs" style="left:0.0px;top:477.0px;width:2318.1px;height:1.2px;background:#e5e7eb"></div>
<div class="abs" style="left:0.0px;top:581.8px;width:2318.1px;height:1.2px;background:#e5e7eb"></div>
<div class="abs" style="left:0.0px;top:687.0px;width:2318.1px;height:1.2px;background:#e5e7eb"></div>
<div class="abs" style="left:0.0px;top:791.3px;width:2318.1px;height:1.2px;background:#e5e7eb"></div>
<div class="t" style="left:11.1px;top:101.7px;font-size:21.3px;-webkit-text-stroke:0.5px currentColor;color:#030712;">Aleeza</div>
<div class="t" style="left:221.7px;top:101.9px;font-size:21px;color:#030712;">dcvda@gmail.com</div>
<div class="t" style="left:580.2px;top:102.5px;font-size:20.3px;color:#030712;font-family:'Liberation Mono',monospace;-webkit-text-stroke:0.3px currentColor;">GHJD55</div>
<div class="abs" style="left:753.6px;top:72.2px;width:237.8px;height:78.3px;border:1px solid #e5e7eb;border-radius:8px;padding:4px 0 0 16px;font-size:18.5px;font-weight:700;line-height:23.3px;color:#030712;white-space:nowrap">B Tech - Artificial<br>Intelligence (AI) -<br>2023-2027</div>
<div class="abs badge" style="left:1105.3px;top:96.3px;width:44.3px;background:#f3f4f6;color:#111827;border:1px solid transparent">0</div>
<div class="abs badge" style="left:1345.2px;top:96.3px;width:54.6px;border:1px solid #e5e7eb;color:#030712;background:#fff">30</div>
<div class="abs badge" style="left:1609.0px;top:96.3px;width:44.3px;background:#f3f4f6;color:#111827;border:1px solid transparent">0</div>
<div class="abs badge" style="left:1869.5px;top:96.3px;width:64.9px;border:1px solid #e5e7eb;color:#030712;background:#fff">175</div>
<div class="abs" style="left:2173.3px;top:112.5px;width:6.8px;height:2.1px;background:#6b7280"></div>
<div class="t" style="left:11.1px;top:205.6px;font-size:21.3px;-webkit-text-stroke:0.5px currentColor;color:#030712;">Amira Bhasin</div>
<div class="t" style="left:221.7px;top:205.8px;font-size:21px;color:#030712;">rajagopalpurab@yahoo.com</div>
<div class="t" style="left:580.2px;top:206.4px;font-size:20.3px;color:#030712;font-family:'Liberation Mono',monospace;-webkit-text-stroke:0.3px currentColor;">BT0068</div>
<div class="abs" style="left:753.6px;top:176.1px;width:237.8px;height:78.3px;border:1px solid #e5e7eb;border-radius:8px;padding:4px 0 0 16px;font-size:18.5px;font-weight:700;line-height:23.3px;color:#030712;white-space:nowrap">B Tech - Artificial<br>Intelligence (AI) -<br>2023-2027</div>
<div class="abs badge" style="left:1105.3px;top:200.2px;width:44.3px;background:#f3f4f6;color:#111827;border:1px solid transparent">0</div>
<div class="abs badge" style="left:1345.2px;top:200.2px;width:54.6px;border:1px solid #e5e7eb;color:#030712;background:#fff">39</div>
<div class="abs badge" style="left:1609.0px;top:200.2px;width:44.3px;background:#f3f4f6;color:#111827;border:1px solid transparent">0</div>
<div class="abs badge" style="left:1869.5px;top:200.2px;width:64.9px;border:1px solid #e5e7eb;color:#030712;background:#fff">242</div>
<div class="abs" style="left:2173.3px;top:216.4px;width:6.8px;height:2.1px;background:#6b7280"></div>
<div class="t" style="left:11.1px;top:310.4px;font-size:21.3px;-webkit-text-stroke:0.5px currentColor;color:#030712;">Anaya Mangal</div>
<div class="t" style="left:221.7px;top:310.6px;font-size:21px;color:#030712;">jayan66@majumdar.com</div>
<div class="t" style="left:580.2px;top:311.2px;font-size:20.3px;color:#030712;font-family:'Liberation Mono',monospace;-webkit-text-stroke:0.3px currentColor;">BT0158</div>
<div class="abs" style="left:753.6px;top:280.9px;width:237.8px;height:78.3px;border:1px solid #e5e7eb;border-radius:8px;padding:4px 0 0 16px;font-size:18.5px;font-weight:700;line-height:23.3px;color:#030712;white-space:nowrap">B Tech - Artificial<br>Intelligence (AI) -<br>2023-2027</div>
<div class="abs badge" style="left:1105.3px;top:305.0px;width:44.3px;background:#f3f4f6;color:#111827;border:1px solid transparent">0</div>
<div class="abs badge" style="left:1345.2px;top:305.0px;width:54.6px;border:1px solid #e5e7eb;color:#030712;background:#fff">37</div>
<div class="abs badge" style="left:1609.0px;top:305.0px;width:44.3px;background:#f3f4f6;color:#111827;border:1px solid transparent">0</div>
<div class="abs badge" style="left:1869.5px;top:305.0px;width:64.9px;border:1px solid #e5e7eb;color:#030712;background:#fff">204</div>
<div class="abs" style="left:2173.3px;top:321.2px;width:6.8px;height:2.1px;background:#6b7280"></div>
<div class="t" style="left:11.1px;top:414.9px;font-size:21.3px;-webkit-text-stroke:0.5px currentColor;color:#030712;">Armaan Sood</div>
<div class="t" style="left:221.7px;top:415.1px;font-size:21px;color:#030712;">sbasu@yahoo.com</div>
<div class="t" style="left:580.2px;top:415.7px;font-size:20.3px;color:#030712;font-family:'Liberation Mono',monospace;-webkit-text-stroke:0.3px currentColor;">BT0018</div>
<div class="abs" style="left:753.6px;top:385.4px;width:237.8px;height:78.3px;border:1px solid #e5e7eb;border-radius:8px;padding:4px 0 0 16px;font-size:18.5px;font-weight:700;line-height:23.3px;color:#030712;white-space:nowrap">B Tech - Artificial<br>Intelligence (AI) -<br>2023-2027</div>
<div class="abs badge" style="left:1106.8px;top:409.5px;width:41.3px;background:#111827;color:#fff;border:1px solid transparent;box-shadow:0 1px 2px rgba(0,0,0,.1)">1</div>
<div class="abs badge" style="left:1345.2px;top:409.5px;width:54.6px;border:1px solid #e5e7eb;color:#030712;background:#fff">39</div>
<div class="abs badge" style="left:1610.5px;top:409.5px;width:41.3px;background:#111827;color:#fff;border:1px solid transparent;box-shadow:0 1px 2px rgba(0,0,0,.1)">1</div>
<div class="abs badge" style="left:1869.5px;top:409.5px;width:64.9px;border:1px solid #e5e7eb;color:#030712;background:#fff">244</div>
<div class="abs" style="left:2049.4px;top:397.8px;width:254.7px;height:54.8px;border:1px solid #e5e7eb;border-radius:8px;padding:4px 0 0 15.5px;font-size:18.5px;font-weight:700;line-height:23.7px;color:#030712;white-space:nowrap">Yoursthatsenior-SDE-2-<br>Full-time</div>
<div class="t" style="left:11.1px;top:519.6px;font-size:21.3px;-webkit-text-stroke:0.5px currentColor;color:#030712;">Bhamini Goel</div>
<div class="t" style="left:221.7px;top:519.8px;font-size:21px;color:#030712;">ramkrish@raval.com</div>
<div class="t" style="left:580.2px;top:520.4px;font-size:20.3px;color:#030712;font-family:'Liberation Mono',monospace;-webkit-text-stroke:0.3px currentColor;">BT0118</div>
<div class="abs" style="left:753.6px;top:490.1px;width:237.8px;height:78.3px;border:1px solid #e5e7eb;border-radius:8px;padding:4px 0 0 16px;font-size:18.5px;font-weight:700;line-height:23.3px;color:#030712;white-space:nowrap">B Tech - Artificial<br>Intelligence (AI) -<br>2023-2027</div>
<div class="abs badge" style="left:1105.3px;top:514.2px;width:44.3px;background:#f3f4f6;color:#111827;border:1px solid transparent">0</div>
<div class="abs badge" style="left:1345.2px;top:514.2px;width:54.6px;border:1px solid #e5e7eb;color:#030712;background:#fff">30</div>
<div class="abs badge" style="left:1609.0px;top:514.2px;width:44.3px;background:#f3f4f6;color:#111827;border:1px solid transparent">0</div>
<div class="abs badge" style="left:1869.5px;top:514.2px;width:64.9px;border:1px solid #e5e7eb;color:#030712;background:#fff">176</div>
<div class="abs" style="left:2173.3px;top:530.4px;width:6.8px;height:2.1px;background:#6b7280"></div>
<div class="t" style="left:11.1px;top:624.4px;font-size:21.3px;-webkit-text-stroke:0.5px currentColor;color:#030712;">Eshani Shetty</div>
<div class="t" style="left:221.7px;top:624.6px;font-size:21px;color:#030712;">senguptabiju@shere.biz</div>
<div class="t" style="left:580.2px;top:625.2px;font-size:20.3px;color:#030712;font-family:'Liberation Mono',monospace;-webkit-text-stroke:0.3px currentColor;">BT0168</div>
<div class="abs" style="left:753.6px;top:594.9px;width:237.8px;height:78.3px;border:1px solid #e5e7eb;border-radius:8px;padding:4px 0 0 16px;font-size:18.5px;font-weight:700;line-height:23.3px;color:#030712;white-space:nowrap">B Tech - Artificial<br>Intelligence (AI) -<br>2023-2027</div>
<div class="abs badge" style="left:1105.3px;top:619.0px;width:44.3px;background:#f3f4f6;color:#111827;border:1px solid transparent">0</div>
<div class="abs badge" style="left:1345.2px;top:619.0px;width:54.6px;border:1px solid #e5e7eb;color:#030712;background:#fff">39</div>
<div class="abs badge" style="left:1609.0px;top:619.0px;width:44.3px;background:#f3f4f6;color:#111827;border:1px solid transparent">0</div>
<div class="abs badge" style="left:1869.5px;top:619.0px;width:64.9px;border:1px solid #e5e7eb;color:#030712;background:#fff">241</div>
<div class="abs" style="left:2173.3px;top:635.2px;width:6.8px;height:2.1px;background:#6b7280"></div>
<div class="t" style="left:11.1px;top:729.6px;font-size:21.3px;-webkit-text-stroke:0.5px currentColor;color:#030712;">Faiyaz D&#8217;Alia</div>
<div class="t" style="left:221.7px;top:729.8px;font-size:21px;color:#030712;">shaan12@chand.biz</div>
<div class="t" style="left:580.2px;top:730.4px;font-size:20.3px;color:#030712;font-family:'Liberation Mono',monospace;-webkit-text-stroke:0.3px currentColor;">BT0148</div>
<div class="abs" style="left:753.6px;top:700.1px;width:237.8px;height:78.3px;border:1px solid #e5e7eb;border-radius:8px;padding:4px 0 0 16px;font-size:18.5px;font-weight:700;line-height:23.3px;color:#030712;white-space:nowrap">B Tech - Artificial<br>Intelligence (AI) -<br>2023-2027</div>
<div class="abs badge" style="left:1105.3px;top:724.2px;width:44.3px;background:#f3f4f6;color:#111827;border:1px solid transparent">0</div>
<div class="abs badge" style="left:1345.2px;top:724.2px;width:54.6px;border:1px solid #e5e7eb;color:#030712;background:#fff">39</div>
<div class="abs badge" style="left:1609.0px;top:724.2px;width:44.3px;background:#f3f4f6;color:#111827;border:1px solid transparent">0</div>
<div class="abs badge" style="left:1869.5px;top:724.2px;width:64.9px;border:1px solid #e5e7eb;color:#030712;background:#fff">243</div>
<div class="abs" style="left:2173.3px;top:740.4px;width:6.8px;height:2.1px;background:#6b7280"></div>
</div>
<div class="abs" style="left:2253.0px;top:1172.8px;width:103.0px;height:51.3px;border:1px solid #e5e7eb;border-radius:8px;background:#fff;box-shadow:0 1px 2px rgba(0,0,0,.05)"></div>
<div class="t" style="left:2276.0px;top:1188.3px;font-size:21.1px;-webkit-text-stroke:0.5px currentColor;color:#030712;">Close</div>
</div>
<!--MODAL-END-->
</body>
</html>
